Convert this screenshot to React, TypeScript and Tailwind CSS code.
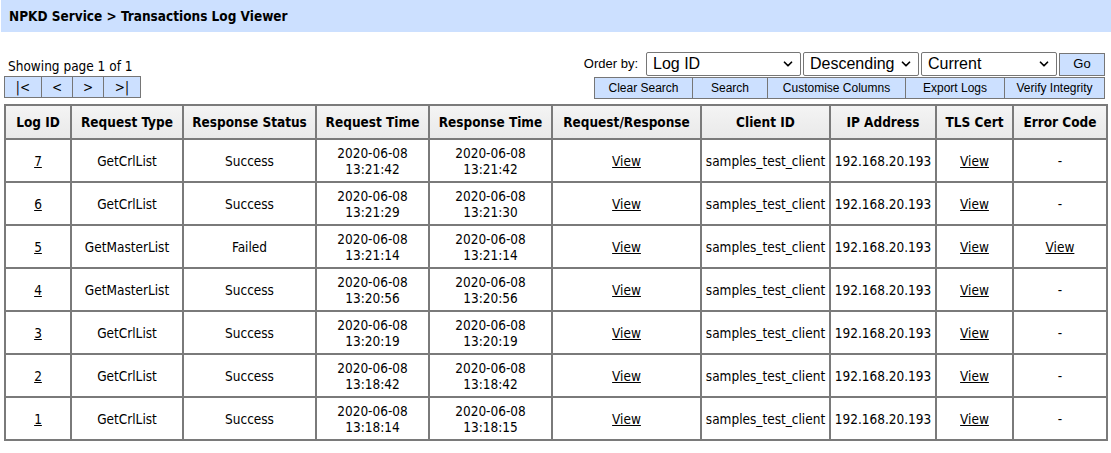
import React from 'react';
import { ChevronDown } from 'lucide-react';

const rows = [
  { id: 7, type: 'GetCrlList', status: 'Success', req: '13:21:42', res: '13:21:42', err: false },
  { id: 6, type: 'GetCrlList', status: 'Success', req: '13:21:29', res: '13:21:30', err: false },
  { id: 5, type: 'GetMasterList', status: 'Failed', req: '13:21:14', res: '13:21:14', err: true },
  { id: 4, type: 'GetMasterList', status: 'Success', req: '13:20:56', res: '13:20:56', err: false },
  { id: 3, type: 'GetCrlList', status: 'Success', req: '13:20:19', res: '13:20:19', err: false },
  { id: 2, type: 'GetCrlList', status: 'Success', req: '13:18:42', res: '13:18:42', err: false },
  { id: 1, type: 'GetCrlList', status: 'Success', req: '13:18:14', res: '13:18:15', err: false },
];

const columns = [
  { label: 'Log ID', w: 'w-[66px]' },
  { label: 'Request Type', w: 'w-[112px]' },
  { label: 'Response Status', w: 'w-[133px]' },
  { label: 'Request Time', w: 'w-[113px]' },
  { label: 'Response Time', w: 'w-[123px]' },
  { label: 'Request/Response', w: 'w-[149px]' },
  { label: 'Client ID', w: 'w-[129px]' },
  { label: 'IP Address', w: 'w-[106px]' },
  { label: 'TLS Cert', w: 'w-[77px]' },
  { label: 'Error Code', w: 'w-[94px]' },
];

function FakeSelect({ value, width }: { value: string; width: string }) {
  return (
    <div className={`${width} h-6 flex items-center justify-between border border-[#767676] rounded-[2px] bg-white pl-[6px] pr-[5px] font-['Liberation_Sans',Arial,sans-serif] text-[16px] text-black`}>
      <span className="leading-none">{value}</span>
      <ChevronDown className="w-[14px] h-[14px]" strokeWidth={3} />
    </div>
  );
}

const btn = "h-[22px] flex items-center justify-center border border-[#767676] bg-[#cce0ff] font-['Liberation_Sans',Arial,sans-serif] text-[12px] text-black";
const pager = "h-[22px] flex items-center justify-center border border-[#767676] bg-[#cce0ff] text-black";

export default function App() {
  return (
    <div className="w-[1111px] h-[453px] bg-white text-black text-[13.5px] font-['DejaVu_Sans_Condensed','Liberation_Sans',sans-serif]">
      {/* Title band */}
      <div className="h-8 ml-px bg-[#cce0ff] flex items-center pl-2 font-bold text-[13.5px]">
        NPKD Service &gt; Transactions Log Viewer
      </div>

      {/* Controls */}
      <div className="flex justify-between items-end pl-1 pr-[6px] mt-5">
        <div className="flex flex-col mb-px">
          <div className="pl-1 leading-5">Showing page 1 of 1</div>
          <div className="flex">
            <div className={`${pager} w-[38px]`}>|&lt;</div>
            <div className={`${pager} w-[31px] border-l-0`}>&lt;</div>
            <div className={`${pager} w-[31px] border-l-0`}>&gt;</div>
            <div className={`${pager} w-[37px] border-l-0`}>&gt;|</div>
          </div>
        </div>

        <div className="flex flex-col items-end">
          <div className="flex items-center gap-[2px]">
            <span className="font-['Liberation_Sans',Arial,sans-serif] text-[13px] mr-[6px]">Order by:</span>
            <FakeSelect value="Log ID" width="w-[155px]" />
            <FakeSelect value="Descending" width="w-[116px]" />
            <FakeSelect value="Current" width="w-[136px]" />
            <div className={`${btn} w-[46px] h-[23px] text-[13px]`}>Go</div>
          </div>
          <div className="flex mt-px">
            <div className={`${btn} w-[99px]`}>Clear Search</div>
            <div className={`${btn} w-[75px] border-l-0`}>Search</div>
            <div className={`${btn} w-[138px] border-l-0`}>Customise Columns</div>
            <div className={`${btn} w-[99px] border-l-0`}>Export Logs</div>
            <div className={`${btn} w-[100px] border-l-0`}>Verify Integrity</div>
          </div>
        </div>
      </div>

      {/* Log table */}
      <div className="pl-1 mt-[5px]">
        <table className="table-fixed border-collapse w-[1102px] border-2 border-[#7a7a7a]">
          <colgroup>
            {columns.map((c) => (
              <col key={c.label} className={c.w} />
            ))}
          </colgroup>
          <thead>
            <tr className="h-[34px] bg-gradient-to-b from-[#f4f4f4] to-[#e9e9e9]">
              {columns.map((c) => (
                <th key={c.label} className="border-2 border-[#7a7a7a] font-bold text-center px-0 whitespace-nowrap">
                  {c.label}
                </th>
              ))}
            </tr>
          </thead>
          <tbody>
            {rows.map((r) => (
              <tr key={r.id} className="h-[43px] text-center leading-4">
                <td className="border-2 border-[#7a7a7a]"><a className="underline">{r.id}</a></td>
                <td className="border-2 border-[#7a7a7a]">{r.type}</td>
                <td className="border-2 border-[#7a7a7a]">{r.status}</td>
                <td className="border-2 border-[#7a7a7a]">2020-06-08<br />{r.req}</td>
                <td className="border-2 border-[#7a7a7a]">2020-06-08<br />{r.res}</td>
                <td className="border-2 border-[#7a7a7a]"><a className="underline">View</a></td>
                <td className="border-2 border-[#7a7a7a] whitespace-nowrap">samples_test_client</td>
                <td className="border-2 border-[#7a7a7a]">192.168.20.193</td>
                <td className="border-2 border-[#7a7a7a]"><a className="underline">View</a></td>
                <td className="border-2 border-[#7a7a7a]">{r.err ? <a className="underline">View</a> : '-'}</td>
              </tr>
            ))}
          </tbody>
        </table>
      </div>
    </div>
  );
}
